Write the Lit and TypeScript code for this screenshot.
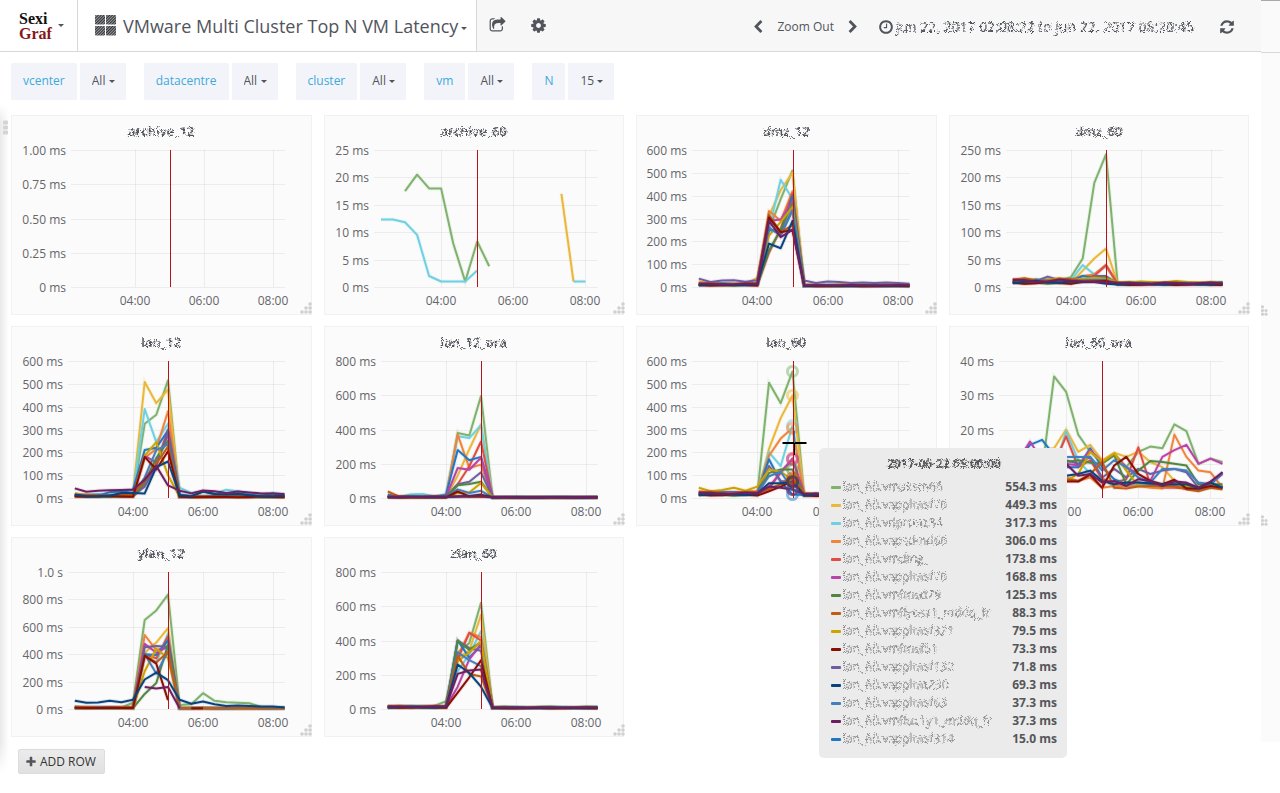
import { LitElement, html, svg, css, nothing } from "lit";
import { customElement, property, state } from "lit/decorators.js";

const GREEN = "#7EB26D", YELLOW = "#EAB839", CYAN = "#6ED0E0", ORANGE = "#EF843C", RED = "#E24D42",
  BLUE = "#1F78C1", MAGENTA = "#BA43A9", PURPLE = "#705DA0", FOREST = "#508642", GOLD = "#CCA300",
  STEEL = "#447EBC", RUST = "#C15C17", DARKRED = "#890F02", NAVY = "#0A437C", PLUM = "#6D1F62";
const PALETTE = [GREEN, YELLOW, CYAN, ORANGE, RED, BLUE, MAGENTA, PURPLE, FOREST, GOLD, STEEL, RUST, DARKRED, NAVY, PLUM];

type Value = number | null;
interface Series { color: string; values: Value[]; mark?: number; }
interface TipRow { color: string; name: string; value: string; }
interface Tip { time: string; rows: TipRow[]; }
interface Chart { title: string; labels: string[]; max: number; gutter: number; series: Series[]; tip?: Tip; }

/* Samples arrive every 20 minutes from 02:20 to 08:20; times are minutes after 02:08:22. */
const RANGE = 372.4;
const FIRST = 11.6;
const STEP = 20;
const EVENT = 172.8;
const HOURS: [string, number][] = [["04:00", 111.6], ["06:00", 231.6], ["08:00", 351.6]];

const wobble = (base: number, count: number, seed: number): number[] =>
  Array.from({ length: count }, (_, i) => base * (1 + 0.22 * Math.sin(i * 1.7 + seed * 2.3)));

const spike = (color: string, peak: number[], before: number | Value[], after: number | Value[]): Series => {
  const seed = PALETTE.indexOf(color);
  const pre = typeof before === "number" ? wobble(before, 6, seed) : before;
  const post = typeof after === "number" ? wobble(after, 10, seed) : after;
  return { color, values: [...pre, ...peak, ...post] };
};

const burst = (
  peaks: number[][], before: number, after: number,
  special: Record<string, [number | Value[], number | Value[]]> = {},
): Series[] => PALETTE.map((color, i) => {
  const own = special[color];
  return own
    ? spike(color, peaks[i], own[0], own[1])
    : spike(color, peaks[i], before * (0.75 + (i % 4) * 0.18), after * (0.75 + (i % 3) * 0.2));
});

const from = (color: string, start: number, values: Value[]): Series => ({
  color, values: [...Array<Value>(start).fill(null), ...values],
});

const lan60 = burst(
  [[505, 415, 554.3], [215, 350, 449.3], [200, 140, 317.3], [185, 260, 306], [50, 110, 173.8],
   [170, 70, 15], [40, 115, 168.8], [140, 75, 71.8], [110, 125, 125.3], [125, 115, 79.5],
   [95, 115, 37.3], [40, 60, 88.3], [30, 50, 73.3], [65, 65, 69.3], [50, 45, 37.3]],
  18, 14, { [GOLD]: [[45, 30, 35, 45, 32, 50], 18], [RED]: [[28, 24, 26, 25, 27, 30], 20] },
).map((s) => ({ ...s, mark: 8 }));

const charts: Chart[] = [
  { title: "archive_12", labels: ["1.00 ms", "0.75 ms", "0.50 ms", "0.25 ms", "0 ms"], max: 1, gutter: 60, series: [] },
  { title: "archive_60", labels: ["25 ms", "20 ms", "15 ms", "10 ms", "5 ms", "0 ms"], max: 25, gutter: 50, series: [
    from(GREEN, 2, [17.5, 20.5, 18, 18, 8, 1, 8.3, 3.8]),
    from(YELLOW, 15, [17, 1]),
    from(CYAN, 0, [12.3, 12.3, 11.8, 9.5, 2, 1, 1, 1, 3, null, null, null, null, null, null, null, 1, 1]),
  ] },
  { title: "dmz_12", labels: ["600 ms", "500 ms", "400 ms", "300 ms", "200 ms", "100 ms", "0 ms"], max: 600, gutter: 56,
    series: burst(
      [[250, 385, 510], [310, 425, 500], [250, 470, 385], [333, 290, 420], [150, 255, 410],
       [250, 240, 400], [290, 295, 375], [310, 230, 340], [160, 250, 365], [225, 285, 350],
       [260, 225, 335], [315, 240, 270], [305, 240, 250], [190, 170, 290], [290, 218, 250]],
      11, 6, {
        [PURPLE]: [[37, 22, 28, 30, 23, 30], [28, 18, 24, 22, 17, 20, 17, 20, 18, 14]],
        [YELLOW]: [[25, 15, 16, 14, 15, 40], 10],
      }) },
  { title: "dmz_60", labels: ["250 ms", "200 ms", "150 ms", "100 ms", "50 ms", "0 ms"], max: 250, gutter: 57,
    series: burst(
      [[52, 190, 242], [30, 52, 70], [40, 23, 38], [20, 23, 40], [12, 20, 40],
       [20, 17, 15], [10, 12, 11], [12, 20, 20], [13, 14, 18], [15, 17, 15],
       [12, 13, 13], [10, 11, 10], [9, 10, 11], [9, 9, 6], [10, 9, 9]],
      10, 6, {
        [GREEN]: [[12, 11, 12, 14, 13, 18], 7],
        [GOLD]: [[11, 16, 13, 13, 16, 13], [9, 8, 10, 9, 8, 11, 9, 8, 8, 7]],
        [PURPLE]: [[11, 8, 11, 19, 13, 10], 6],
      }) },
  { title: "lan_12", labels: ["600 ms", "500 ms", "400 ms", "300 ms", "200 ms", "100 ms", "0 ms"], max: 600, gutter: 57,
    series: burst(
      [[325, 365, 515], [508, 415, 475], [390, 245, 325], [175, 215, 380], [60, 150, 300],
       [210, 220, 295], [185, 155, 275], [50, 140, 290], [70, 175, 250], [185, 245, 100],
       [90, 210, 235], [80, 150, 225], [180, 125, 205], [20, 135, 160], [80, 140, 55]],
      9, 6, {
        [CYAN]: [14, [45, 22, 28, 20, 36, 30, 22, 18, 22, 15]],
        [YELLOW]: [[22, 12, 12, 14, 14, 20], 8],
        [NAVY]: [[15, 8, 8, 10, 22, 22], [12, 8, 28, 18, 15, 17, 12, 8, 8, 10]],
        [PLUM]: [[42, 27, 32, 34, 35, 37], [32, 20, 33, 30, 22, 28, 24, 20, 20, 17]],
        [BLUE]: [[12, 9, 10, 26, 27, 35], [15, 8, 28, 18, 14, 20, 14, 8, 20, 10]],
      }) },
  { title: "lan_12_ora", labels: ["800 ms", "600 ms", "400 ms", "200 ms", "0 ms"], max: 800, gutter: 57,
    series: burst(
      [[380, 365, 595], [130, 285, 430], [360, 350, 425], [370, 175, 195], [80, 185, 330],
       [280, 220, 240], [175, 165, 235], [80, 95, 150], [75, 82, 95], [30, 32, 88],
       [50, 30, 42], [10, 5, 5], [38, 10, 20], [8, 12, 15], [8, 10, 10]],
      6, 4, {
        [CYAN]: [[12, 6, 22, 24, 10, 22], 6],
        [RUST]: [[38, 8, 7, 6, 7, 8], 5],
        [BLUE]: [[20, 6, 5, 6, 7, 18], 5],
      }) },
  { title: "lan_60", labels: ["600 ms", "500 ms", "400 ms", "300 ms", "200 ms", "100 ms", "0 ms"], max: 600, gutter: 56,
    series: lan60, tip: { time: "2017-06-22 05:00:00", rows: [
      { color: GREEN, name: "lan_60.vmaksm66", value: "554.3 ms" },
      { color: YELLOW, name: "lan_60.vapplmsf76", value: "449.3 ms" },
      { color: CYAN, name: "lan_60.vdprtmz34", value: "317.3 ms" },
      { color: ORANGE, name: "lan_60.vapsdmd66", value: "306.0 ms" },
      { color: RED, name: "lan_60.vmding_", value: "173.8 ms" },
      { color: MAGENTA, name: "lan_60.vapplmsf76", value: "168.8 ms" },
      { color: FOREST, name: "lan_60.vmfmsd79", value: "125.3 ms" },
      { color: RUST, name: "lan_60.vmflyosz1_mddq_fr", value: "88.3 ms" },
      { color: GOLD, name: "lan_60.vapplmsf321", value: "79.5 ms" },
      { color: DARKRED, name: "lan_60.vmfmsf51", value: "73.3 ms" },
      { color: PURPLE, name: "lan_60.vapplmsf132", value: "71.8 ms" },
      { color: NAVY, name: "lan_60.vapplmt230", value: "69.3 ms" },
      { color: STEEL, name: "lan_60.vapplmsf63", value: "37.3 ms" },
      { color: PLUM, name: "lan_60.vmfluc1y1_mddq_fr", value: "37.3 ms" },
      { color: BLUE, name: "lan_60.vapplmsf314", value: "15.0 ms" },
    ] } },
  { title: "lan_60_ora", labels: ["40 ms", "30 ms", "20 ms", "10 ms", "0 ms"], max: 40, gutter: 50, series: [
    from(GREEN, 3, [8, 35.5, 31, 18.5, 13.5, 10.5, 13, 9, 13.5, 15, 14.5, 21.5, 19.5, 10, 11.5, 10.5]),
    from(YELLOW, 3, [14, 14.5, 20, 13.5, 15.5, 11, 13.2, 12, 13.5, 10.5, 9, 5, 4, 3, 3.5, 3.5]),
    from(CYAN, 4, [8, 19.5, 11, 7, 6, 3, 4, 4, 3.5, 3.5, 3.5, 3, 3, 3, 3.5]),
    from(ORANGE, 4, [6, 6, 5, 6, 3, 3.5, 3.5, 3.5, 3, 2.8, 18.5, 12, 8, 7.5, 3]),
    from(RED, 4, [10, 18, 9, 11, 5.5, 4.5, 5.5, 14.8, 4, 3, 3, 2.8, 3, 3.4, 3]),
    from(BLUE, 1, [11, 15.5, 17, 12.5, 9, 9, 14.5, 9, 5.5, 4, 4.5, 4, 3.5, 4, 3, 2.5, 3, 3]),
    from(MAGENTA, 1, [11, 16.5, 11, 9, 10, 9.5, 14, 10.5, 12.5, 9, 7, 5, 12, 14, 15.5, 10, 11.5, 10]),
    from(PURPLE, 4, [11, 11, 10, 12, 6, 8.5, 6, 8.5, 7, 8, 8.5, 7.5, 3, 4, 7]),
    from(FOREST, 4, [10, 10.5, 11, 10.3, 10, 12.5, 4, 8, 10.8, 10.5, 10, 9.5, 4, 4, 4]),
    from(GOLD, 4, [5, 5, 7, 13.5, 10.5, 13, 8, 3.5, 3.5, 3.3, 3.5, 3.5, 3, 3.5, 3]),
    from(STEEL, 4, [12, 12, 12, 12, 8, 11, 9, 6, 4.5, 8.5, 8.5, 8, 4.5, 4, 7.5]),
    from(RUST, 4, [5, 5.5, 5, 7, 10.5, 3, 2.8, 3.4, 3.5, 3.6, 3.5, 2.5, 2, 3, 2.5]),
    from(DARKRED, 4, [5, 4.8, 4.8, 6.8, 3, 9.5, 12, 7, 5, 4, 5.3, 2.8, 2.8, 3.5, 3]),
    from(NAVY, 4, [6, 6.5, 7, 8, 5, 4, 4.5, 4.5, 4.3, 4, 4, 4, 3, 4.5, 3]),
    from(PLUM, 4, [10, 10, 6.5, 7, 4.5, 5, 3.5, 5.5, 5, 3.5, 4.8, 4.5, 3, 4.8, 7.5]),
  ] },
  { title: "ylan_12", labels: ["1.0 s", "800 ms", "600 ms", "400 ms", "200 ms", "0 ms"], max: 1000, gutter: 57,
    series: burst(
      [[650, 720, 835], [410, 485, 590], [390, 340, 550], [540, 430, 460], [400, 370, 530],
       [400, 395, 500], [475, 410, 455], [450, 460, 455], [110, 190, 470], [275, 440, 370],
       [400, 260, 420], [385, 340, 415], [390, 330, 65], [215, 265, 210], [160, 150, 160]],
      9, 6, {
        [GREEN]: [[20, 12, 12, 12, 12, 45], [30, 35, 115, 60, 50, 45, 42, 15, 12, 10]],
        [NAVY]: [[60, 45, 48, 60, 50, 68], [68, 38, 55, 35, 22, 25, 22, 18, 18, 12]],
        [PLUM]: [[null, null, null, null, null, null], [6]],
        [DARKRED]: [8, [null, 5, 5]],
        [FOREST]: [[5, 5, 5, 5, 5, 6], 6],
      }) },
  { title: "zlan_60", labels: ["800 ms", "600 ms", "400 ms", "200 ms", "0 ms"], max: 800, gutter: 57,
    series: burst(
      [[330, 385, 620], [300, 340, 550], [220, 320, 455], [310, 445, 420], [290, 445, 400],
       [400, 300, 370], [130, 290, 380], [400, 355, 340], [400, 345, 390], [280, 330, 395],
       [330, 285, 250], [310, 205, 190], [95, 185, 285], [260, 210, 130], [205, 225, 230]],
      12, 7, { [GREEN]: [[18, 16, 17, 17, 18, 45], 12] }) },
];

/* Roughens text that must not be legible. */
const maskFilter = html`
  <svg class="defs" width="0" height="0" aria-hidden="true">
    <filter id="mask" x="-5%" y="-20%" width="110%" height="140%">
      <feTurbulence type="fractalNoise" baseFrequency="0.9" numOctaves="2" seed="4" result="noise"></feTurbulence>
      <feDisplacementMap in="SourceGraphic" in2="noise" scale="5" xChannelSelector="R" yChannelSelector="G"></feDisplacementMap>
    </filter>
  </svg>`;

@customElement("graph-panel")
class GraphPanel extends LitElement {
  @property({ attribute: false }) chart!: Chart;
  @state() private width = 299;
  private observer?: ResizeObserver;

  static styles = css`
    :host { display: block; position: relative; min-width: 0; }
    .panel { height: 200px; box-sizing: border-box; border: 1px solid #f1f1f4; background: #fbfbfb; display: flex; flex-direction: column; }
    .title { margin: 0; height: 32px; line-height: 30px; text-align: center; font-size: 13px; font-weight: 600; color: #52545c; }
    .masked { filter: url(#mask); }
    .defs { position: absolute; }
    .plot { display: block; overflow: visible; }
    .grid { stroke: #000; stroke-opacity: 0.06; stroke-width: 1; }
    .tick { fill: #65666a; font-size: 12px; }
    .line { fill: none; stroke-width: 2; stroke-linejoin: round; }
    .shade { fill: none; stroke-width: 4; stroke-opacity: 0.12; }
    .event { stroke: #b4141a; stroke-width: 1; }
    .mark { fill: none; stroke-width: 3; stroke-opacity: 0.5; }
    .grip { fill: #d0d0d2; }
    .tip { position: absolute; left: 183px; top: 122px; z-index: 5; width: 248px; box-sizing: border-box; padding: 7px 10px 10px 12px; border-radius: 5px; background: #ebebeb; font-size: 12px; color: #55565a; }
    .time { height: 20px; line-height: 18px; text-align: center; font-weight: 700; margin-bottom: 3px; }
    table { width: 100%; border-collapse: collapse; }
    td { padding: 0; height: 18px; line-height: 18px; white-space: nowrap; }
    .swatch { width: 12px; }
    .dash { display: block; width: 10px; height: 3px; border-radius: 1px; background: var(--c); }
    .name { color: #8f8f92; }
    .value { text-align: right; font-weight: 700; }
  `;

  connectedCallback() {
    super.connectedCallback();
    this.observer = new ResizeObserver(([entry]) => { this.width = Math.round(entry.contentRect.width) - 2; });
    this.observer.observe(this);
  }

  disconnectedCallback() {
    super.disconnectedCallback();
    this.observer?.disconnect();
  }

  private renderPlot() {
    const { labels, max, gutter, series, tip } = this.chart;
    const left = gutter - 1, right = this.width - 26, top = 2, bottom = 139;
    const x = (minute: number) => left + (minute / RANGE) * (right - left);
    const y = (value: number) => bottom - (value / max) * (bottom - top);
    const crisp = (n: number) => Math.round(n) + 0.5;
    const path = (values: Value[]) => {
      let pen = "M";
      return values.map((v, i) => {
        if (v === null) { pen = "M"; return ""; }
        const point = `${pen}${x(FIRST + STEP * i).toFixed(1)} ${y(v).toFixed(1)}`;
        pen = "L";
        return point;
      }).join("");
    };
    const eventX = Math.floor(x(EVENT)) + 0.5;
    const w = this.width;
    return html`<svg class="plot" width=${w} height="166" viewBox="0 0 ${w} 166" role="img" aria-label="Latency">
      ${labels.map((label, i) => {
        const ly = top + ((bottom - top) * i) / (labels.length - 1);
        return svg`<line class="grid" x1=${left} x2=${right} y1=${crisp(ly)} y2=${crisp(ly)}></line>
          <text class="tick" x=${left - 5} y=${Math.round(ly) + 5} text-anchor="end">${label}</text>`;
      })}
      ${HOURS.map(([label, minute]) => svg`
        <line class="grid" x1=${crisp(x(minute))} x2=${crisp(x(minute))} y1=${top} y2=${bottom}></line>
        <text class="tick" x=${Math.round(x(minute))} y="157" text-anchor="middle">${label}</text>`)}
      ${series.map((s) => svg`<path class="shade" stroke=${s.color} d=${path(s.values)}></path>
        <path class="line" stroke=${s.color} d=${path(s.values)}></path>`)}
      ${series.map((s) => s.mark === undefined ? nothing : svg`
        <circle class="mark" stroke=${s.color} r="5" cx=${x(FIRST + STEP * s.mark)} cy=${y(s.values[s.mark] ?? 0)}></circle>`)}
      <line class="event" x1=${eventX} x2=${eventX} y1=${top} y2=${bottom}></line>
      ${tip ? svg`<path d="M${eventX - 11} 83h24v2h-24z" fill="#000"></path>
        <path d="M${eventX + 0.5} 72h1v12h-1z" fill="#1F78C1"></path>
        <path d="M${eventX + 0.5} 84h1v12h-1z" fill="#000"></path>` : nothing}
      ${[[9, 0], [9, 4], [5, 4], [9, 8], [5, 8], [1, 8]].map(([dx, dy]) => svg`
        <circle class="grip" cx=${w - 10 + dx} cy=${156 + dy} r="1.8"></circle>`)}
    </svg>`;
  }

  render() {
    const { title, tip } = this.chart;
    return html`
      ${maskFilter}
      <section class="panel">
        <h2 class="title"><span class="masked">${title}</span></h2>
        ${this.renderPlot()}
      </section>
      ${tip ? html`<div class="tip" role="tooltip">
        <div class="time masked">${tip.time}</div>
        <table>
          ${tip.rows.map((row) => html`<tr>
            <td class="swatch"><span class="dash" style="--c:${row.color}"></span></td>
            <td class="name masked">${row.name}</td>
            <td class="value">${row.value}</td>
          </tr>`)}
        </table>
      </div>` : nothing}`;
  }
}

const ICONS: Record<string, string> = {
  share: "M1472 989v259q0 119-84.5 203.5t-203.5 84.5h-832q-119 0-203.5-84.5t-84.5-203.5v-832q0-119 84.5-203.5t203.5-84.5h255q13 0 22.5 9.5t9.5 22.5q0 27-26 32-77 26-133 60-10 4-16 4h-112q-66 0-113 47t-47 113v832q0 66 47 113t113 47h832q66 0 113-47t47-113v-214q0-19 18-29 28-13 54-37 16-16 35-8 21 9 21 29zm237-496l-384 384q-18 19-45 19-12 0-25-5-39-17-39-59v-192h-160q-323 0-438 131-119 137-74 473 3 23-20 34-8 2-12 2-16 0-26-13-10-14-21-31t-39.5-68.5-49.5-99.5-38.5-114-17.5-122q0-49 3.5-91t14-90 28-88 47-81.5 68.5-74 94.5-61.5 124.5-48.5 159.5-30.5 196.5-11h160v-192q0-42 39-59 13-5 25-5 26 0 45 19l384 384q19 19 19 45t-19 45z",
  cog: "M1152 896q0-106-75-181t-181-75-181 75-75 181 75 181 181 75 181-75 75-181zm512-109v222q0 12-8 23t-20 13l-185 28q-19 54-39 91 35 50 107 138 10 12 10 25t-9 23q-27 37-99 108t-94 71q-12 0-26-9l-138-108q-44 23-91 38-16 136-29 186-7 28-36 28h-222q-14 0-24.5-8.5t-11.5-21.5l-28-184q-49-16-90-37l-141 107q-10 9-25 9-14 0-25-11-126-114-165-168-7-10-7-23 0-12 8-23 15-21 51-66.5t54-70.5q-27-50-41-99l-183-27q-13-2-21-12.5t-8-23.5v-222q0-12 8-23t19-13l186-28q14-46 39-92-40-57-107-138-10-12-10-24 0-10 9-23 26-36 98.5-107.5t94.5-71.5q13 0 26 10l138 107q44-23 91-38 16-136 29-186 7-28 36-28h222q14 0 24.5 8.5t11.5 21.5l28 184q49 16 90 37l142-107q9-9 24-9 13 0 25 10 129 119 165 170 7 8 7 22 0 12-8 23-15 21-51 66.5t-54 70.5q26 50 41 98l183 28q13 2 21 12.5t8 23.5z",
  left: "M1427 301l-531 531 531 531q19 19 19 45t-19 45l-166 166q-19 19-45 19t-45-19l-742-742q-19-19-19-45t19-45l742-742q19-19 45-19t45 19l166 166q19 19 19 45t-19 45z",
  right: "M1363 877l-742 742q-19 19-45 19t-45-19l-166-166q-19-19-19-45t19-45l531-531-531-531q-19-19-19-45t19-45l166-166q19-19 45-19t45 19l742 742q19 19 19 45t-19 45z",
  clock: "M1024 544v448q0 14-9 23t-23 9h-320q-14 0-23-9t-9-23v-64q0-14 9-23t23-9h224v-352q0-14 9-23t23-9h64q14 0 23 9t9 23zm416 352q0-148-73-273t-198-198-273-73-273 73-198 198-73 273 73 273 198 198 273 73 273-73 198-198 73-273zm224 0q0 209-103 385.5t-279.5 279.5-385.5 103-385.5-103-279.5-279.5-103-385.5 103-385.5 279.5-279.5 385.5-103 385.5 103 279.5 279.5 103 385.5z",
  refresh: "M1639 1056q0 5-1 7-64 268-268 434.5t-478 166.5q-146 0-282.5-55t-243.5-157l-129 129q-19 19-45 19t-45-19-19-45v-448q0-26 19-45t45-19h448q26 0 45 19t19 45-19 45l-137 137q71 66 161 102t187 36q134 0 250-65t186-179q11-17 53-117 8-23 30-23h192q13 0 22.5 9.5t9.5 22.5zm25-800v448q0 26-19 45t-45 19h-448q-26 0-45-19t-19-45 19-45l138-138q-148-137-349-137-134 0-250 65t-186 179q-11 17-53 117-8 23-30 23h-199q-13 0-22.5-9.5t-9.5-22.5v-7q65-268 270-434.5t480-166.5q146 0 284 55.5t245 156.5l130-129q19-19 45-19t45 19 19 45z",
  plus: "M1600 736v192q0 40-28 68t-68 28h-416v416q0 40-28 68t-68 28h-192q-40 0-68-28t-28-68v-416h-416q-40 0-68-28t-28-68v-192q0-40 28-68t68-28h416v-416q0-40 28-68t68-28h192q40 0 68 28t28 68v416h416q40 0 68 28t28 68z",
};
const icon = (name: string, size: number) => html`
  <svg class="icon" width=${size} height=${size} viewBox="0 0 1792 1792" aria-hidden="true"><path d=${ICONS[name]}></path></svg>`;

const variables = [
  { name: "vcenter", value: "All" },
  { name: "datacentre", value: "All" },
  { name: "cluster", value: "All" },
  { name: "vm", value: "All" },
  { name: "N", value: "15" },
];

@customElement("app-root")
class AppRoot extends LitElement {
  static styles = css`
    :host { display: grid; grid-template-columns: minmax(0, 1fr) 19px; align-items: start; min-height: 100vh; background: #fff; color: #52545c; font-family: "Open Sans", sans-serif; font-size: 12px; }
    button, select { font: inherit; color: inherit; border: 0; margin: 0; padding: 0; background: none; cursor: pointer; }
    .icon { display: block; fill: #52545c; }
    .defs { position: absolute; }
    .masked { filter: url(#mask); }
    .caret { width: 0; height: 0; border: 3px solid transparent; border-top-color: #52545c; border-bottom: 0; }

    header { display: flex; height: 51px; background: #f7f7f7; border-bottom: 1px solid #d8d8d8; }
    .logo { width: 77px; display: flex; align-items: center; gap: 9px; padding-left: 19px; box-sizing: border-box; background: #fff; }
    .wordmark { display: block; width: 30px; font-family: "Liberation Serif", serif; font-weight: 700; font-size: 16px; line-height: 15px; color: #111; text-align: left; }
    .wordmark b { display: block; color: #86161a; }
    .dash { display: flex; align-items: center; padding: 0 9px 0 17px; background: #fff; border: solid #d8d8d8; border-width: 0 1px; font-size: 18px; white-space: nowrap; }
    .hatch { margin-right: 7px; }
    .dash .caret { margin: 6px 0 0 3px; }
    .tools { display: flex; align-items: center; gap: 24px; padding-left: 12px; }
    .range { display: flex; align-items: center; margin-left: auto; padding: 2px 26px 0 0; }
    .zoom { margin: 0 12px; }
    .time { display: flex; align-items: center; gap: 2px; margin: 0 25px 0 18px; font-size: 14px; white-space: nowrap; }

    .vars { display: flex; flex-wrap: wrap; gap: 8px 18px; padding: 11px 11px 0; }
    .var { display: flex; gap: 3px; }
    .var label, .pick { height: 37px; background: #f3f4f9; border-radius: 1px; }
    .var label { padding: 0 12px; line-height: 36px; color: #3ea9dc; }
    .pick { display: grid; align-items: center; }
    .pick select, .pick .caret { grid-area: 1 / 1; }
    .pick select { appearance: none; height: 37px; padding: 0 20px 2px 12px; }
    .pick .caret { justify-self: end; margin-right: 11px; pointer-events: none; }

    .board { display: grid; grid-template-columns: 11px minmax(0, 1fr); margin-top: 4px; padding-right: 12px; background: linear-gradient(#fff, transparent 20px, transparent calc(100% - 50px), #fff calc(100% - 20px)) no-repeat 0 0 / 9px 100%, linear-gradient(to right, #e9e9e9, #fff) no-repeat 0 0 / 9px 100%; }
    .handle { margin: 16px 0 0 3px; fill: #d4d4d6; }
    .panels { display: grid; grid-template-columns: repeat(4, minmax(0, 1fr)); gap: 11px 12px; padding: 11px 0 12px; }
    .add { grid-column: 2; justify-self: start; display: flex; align-items: center; gap: 3px; margin: 0 0 19px 7px; height: 25px; padding: 0 8px 0 6px; border: 1px solid #dcdcdc; border-radius: 2px; background: linear-gradient(#ececec, #e0e0e0); color: #333; }

    aside { height: 742px; background: #fbfbfb; display: flex; flex-direction: column; }
    .lip { height: 51px; border-top: 1px solid #aaa; border-bottom: 1px solid #d8d8d8; background: #fafafa; }
    .dots { fill: #d0d0d2; }
    .dots.first { margin: 252px 0 199px; }
  `;

  private dots(extra: string) {
    return html`<svg class="dots ${extra}" width="8" height="11" viewBox="0 0 8 11" aria-hidden="true">
      <circle cx="1.5" cy="1.8" r="1.6"></circle><circle cx="1.5" cy="5.5" r="1.6"></circle><circle cx="5" cy="5.5" r="1.6"></circle>
      <circle cx="1.5" cy="9.2" r="1.6"></circle><circle cx="5" cy="9.2" r="1.6"></circle></svg>`;
  }

  render() {
    return html`
      ${maskFilter}
      <div class="page">
        <header>
          <button class="logo" aria-label="SexiGraf menu">
            <span class="wordmark">Sexi<b>Graf</b></span><span class="caret"></span>
          </button>
          <button class="dash">
            <svg class="hatch" width="21" height="21" viewBox="0 0 21 21" aria-hidden="true">
              <defs><pattern id="stripes" width="2" height="2" patternUnits="userSpaceOnUse" patternTransform="rotate(45)">
                <rect width="2" height="2" fill="#c8c8ca"></rect><rect width="1.3" height="2" fill="#303136"></rect></pattern></defs>
              <g fill="url(#stripes)"><rect width="10" height="9.5" rx="1"></rect><rect x="11" width="10" height="9.5" rx="1"></rect>
              <rect y="11" width="10" height="9.5" rx="1"></rect><rect x="11" y="11" width="10" height="9.5" rx="1"></rect></g>
            </svg>
            VMware Multi Cluster Top N VM Latency<span class="caret"></span>
          </button>
          <div class="tools">
            <button aria-label="Share dashboard">${icon("share", 17)}</button>
            <button aria-label="Settings">${icon("cog", 17)}</button>
          </div>
          <div class="range">
            <button aria-label="Earlier">${icon("left", 14)}</button>
            <button class="zoom">Zoom Out</button>
            <button aria-label="Later">${icon("right", 14)}</button>
            <button class="time">${icon("clock", 16)}<span class="masked">jun 22, 2017 02:08:22 to jun 22, 2017 08:20:45</span></button>
            <button aria-label="Refresh">${icon("refresh", 16)}</button>
          </div>
        </header>
        <nav class="vars">
          ${variables.map((v) => html`<div class="var">
            <label for=${v.name}>${v.name}</label>
            <span class="pick"><select id=${v.name}><option>${v.value}</option></select><span class="caret"></span></span>
          </div>`)}
        </nav>
        <main class="board">
          <svg class="handle" width="6" height="16" viewBox="0 0 6 16" aria-hidden="true">
            ${[0, 5, 10].map((y) => svg`<rect x="0" y=${y + 0.5} width="5" height="4" rx="1"></rect>`)}
          </svg>
          <div class="panels">${charts.map((c) => html`<graph-panel .chart=${c}></graph-panel>`)}</div>
          <button class="add">${icon("plus", 12)}ADD ROW</button>
        </main>
      </div>
      <aside><div class="lip"></div>${this.dots("first")}${this.dots("")}</aside>`;
  }
}
